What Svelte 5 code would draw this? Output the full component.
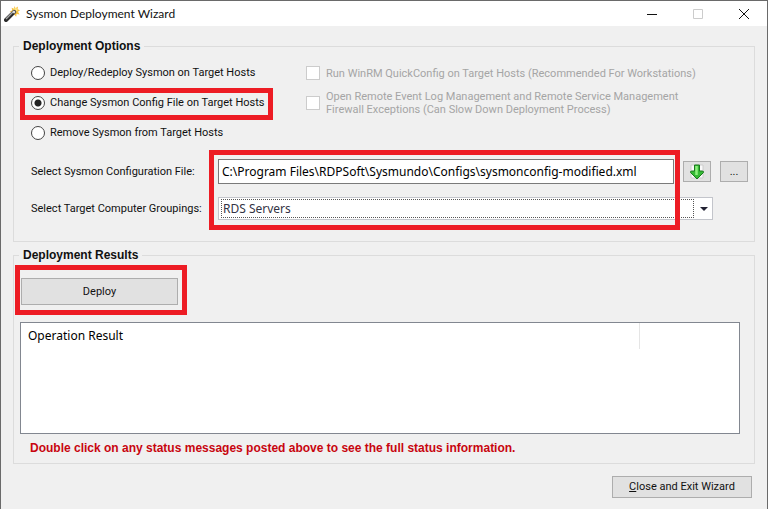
<script lang="ts">
  type Action = 'deploy' | 'change' | 'remove';

  const actions: { value: Action; label: string }[] = [
    { value: 'deploy', label: 'Deploy/Redeploy Sysmon on Target Hosts' },
    { value: 'change', label: 'Change Sysmon Config File on Target Hosts' },
    { value: 'remove', label: 'Remove Sysmon from Target Hosts' }
  ];

  let action = $state<Action>('change');
  let configFile = $state(
    'C:\\Program Files\\RDPSoft\\Sysmundo\\Configs\\sysmonconfig-modified.xml'
  );
  let grouping = $state('RDS Servers');
</script>

<svelte:head>
  <title>Sysmon Deployment Wizard</title>
</svelte:head>

<div class="window">
  <header class="titlebar">
    <svg class="wand" viewBox="0 0 16 16" aria-hidden="true">
      <path
        d="M10.5 0l1 2.2L14 .6l-.5 2.6 2.5 1-2 1.6 1.6 2.8-3-.6-.4 2.8-2-2.4-2.6 1 .8-2.7-2.8-1.4 2.7-.9-.7-2.6 2.4 1z"
        fill="#f7bf3c"
      />
      <circle cx="11.5" cy="4" r="2" fill="#ffe680" />
      <path d="M2 14L10.2 5.8" stroke="#2b2b2b" stroke-width="4" stroke-linecap="round" />
      <path d="M2 13L9.2 5.8" stroke="#a5a5a5" stroke-width="1.4" />
      <path d="M9.2 6.8l1.6-1.6" stroke="#ddd" stroke-width="2.6" />
    </svg>
    <h1>Sysmon Deployment Wizard</h1>
    <div class="window-buttons">
      <button type="button" aria-label="Minimize">
        <svg viewBox="0 0 12 12"><path d="M1 6.5h10" /></svg>
      </button>
      <button type="button" aria-label="Maximize" disabled>
        <svg viewBox="0 0 12 12"><path d="M1.5 1.5h9v9h-9z" /></svg>
      </button>
      <button type="button" aria-label="Close">
        <svg viewBox="0 0 12 12"><path d="M1 1l10 10M11 1L1 11" /></svg>
      </button>
    </div>
  </header>

  <main>
    <fieldset class="options">
      <legend>Deployment Options</legend>

      <div class="choices">
        <div class="radios">
          {#each actions as item}
            <div class="choice">
              <label>
                <input type="radio" name="action" value={item.value} bind:group={action} />
                {item.label}
              </label>
              {#if item.value === 'change'}
                <span class="highlight highlight-choice"></span>
              {/if}
            </div>
          {/each}
        </div>

        <div class="checks">
          <label class="choice">
            <input type="checkbox" disabled />
            <span>Run WinRM QuickConfig on Target Hosts (Recommended For Workstations)</span>
          </label>
          <label class="choice">
            <input type="checkbox" disabled />
            <span>
              Open Remote Event Log Management and Remote Service Management<br />
              Firewall Exceptions (Can Slow Down Deployment Process)
            </span>
          </label>
        </div>
      </div>

      <div class="form">
        <div class="labels">
          <label for="config">Select Sysmon Configuration File:</label>
          <label for="grouping">Select Target Computer Groupings:</label>
        </div>
        <div class="fields">
          <div class="file-row">
            <input id="config" type="text" bind:value={configFile} />
            <button type="button" class="small" aria-label="Download configuration">
              <svg class="download" viewBox="0 0 16 16">
                <path d="M2 1h12v13H2z" fill="#fafafa" stroke="#ccc" />
                <path
                  d="M5.5 1h5v6H13q2 0 1.5 1.5L8 15 1.500 8.500Q1 7 3 7h2.500z"
                  fill="#35b935"
                  stroke="#1c7a1f"
                  stroke-linejoin="round"
                />
                <path d="M7.500 2v9" stroke="#8df07c" stroke-width="2.500" />
              </svg>
            </button>
            <button type="button" class="small" aria-label="Browse">...</button>
          </div>
          <div class="combo">
            <select id="grouping" bind:value={grouping}>
              <option>RDS Servers</option>
            </select>
            <svg viewBox="0 0 8 4" aria-hidden="true"><path d="M0 0h8L4 4z" /></svg>
          </div>
          <span class="highlight highlight-fields"></span>
        </div>
      </div>
    </fieldset>

    <fieldset class="results">
      <legend>Deployment Results</legend>

      <div class="deploy">
        <button type="button">Deploy</button>
        <span class="highlight highlight-deploy"></span>
      </div>

      <div class="list">
        <table>
          <thead>
            <tr>
              <th>Operation Result</th>
              <th class="spare" aria-label="Details"></th>
            </tr>
          </thead>
        </table>
      </div>

      <p class="hint">
        Double click on any status messages posted above to see the full status information.
      </p>
    </fieldset>

    <footer>
      <button type="button" class="close"><u>C</u>lose and Exit Wizard</button>
    </footer>
  </main>
</div>

<style>
  :global(body) {
    margin: 0;
    background: #f0f0f0;
  }

  .window {
    box-sizing: border-box;
    min-height: 100vh;
    border: 1px solid #6a6a6a;
    border-bottom: 0;
    background: #f0f0f0;
    color: #111;
    font-family: Roboto, 'Liberation Sans', sans-serif;
    font-size: 11px;
    line-height: 14px;
  }

  button,
  input,
  select {
    box-sizing: border-box;
    margin: 0;
    color: inherit;
    font: inherit;
  }

  .titlebar {
    display: flex;
    align-items: center;
    height: 25px;
    padding-left: 3px;
    background: #fff;
  }

  .wand {
    width: 16px;
    height: 16px;
  }

  h1 {
    flex: 1;
    margin: 0 0 0 6px;
    font-family: Lato, 'Noto Sans', sans-serif;
    font-size: 12px;
    font-weight: 400;
  }

  .window-buttons {
    display: flex;
  }

  .window-buttons button {
    width: 46px;
    height: 25px;
    padding: 0;
    border: 0;
    background: none;
  }

  .window-buttons svg {
    display: block;
    width: 12px;
    height: 12px;
    margin: auto;
    fill: none;
    stroke: #111;
  }

  .window-buttons button:disabled svg {
    stroke: #ccc;
  }

  main {
    padding: 12px 12px 10px;
  }

  fieldset {
    min-width: 0;
    margin: 0;
    border: 1px solid #dcdcdc;
  }

  legend,
  .hint {
    font-family: 'Liberation Sans', Arial, sans-serif;
    font-size: 12px;
    font-weight: 700;
  }

  legend {
    padding: 0 4px;
    line-height: 16px;
  }

  .options {
    padding: 4px 6px 20px 17px;
  }

  .options legend {
    margin-left: -12px;
  }

  .choices {
    display: grid;
    grid-template-columns: 275px 1fr;
  }

  .radios {
    justify-self: start;
  }

  .choice {
    position: relative;
    display: flex;
    align-items: center;
    height: 30px;
  }

  .choice label {
    display: flex;
    align-items: center;
  }

  .choice input {
    flex: none;
    width: 14px;
    height: 14px;
    margin-right: 6px;
    border: 1px solid #444;
    background: #fff;
    appearance: none;
  }

  .choice input[type='radio'] {
    margin-right: 5px;
    border-radius: 50%;
  }

  .choice input[type='radio']:checked {
    background: radial-gradient(circle, #222 0 3px, #fff 4px);
  }

  .checks .choice {
    color: #a5a5a5;
    line-height: 13px;
  }

  .checks input {
    border-color: #ccc;
  }

  .form {
    display: grid;
    grid-template-columns: 187px 1fr;
    margin-top: 11px;
  }

  .labels,
  .fields {
    position: relative;
    display: grid;
    grid-template-rows: 25px 25px;
    row-gap: 12px;
    align-items: center;
  }

  .file-row {
    display: flex;
    align-items: center;
    gap: 9px;
    min-width: 0;
  }

  .file-row input {
    flex: 1;
    min-width: 0;
    height: 25px;
    padding: 0 3px;
    border: 1px solid #7a7a7a;
    background: #fff;
    color: #000;
    font-family: 'Noto Sans', 'Open Sans', sans-serif;
    font-size: 12px;
  }

  button.small {
    flex: none;
    width: 28px;
    height: 21px;
    padding: 0;
  }

  .small,
  .deploy button,
  .close {
    border: 1px solid #adadad;
    background: #e1e1e1;
  }

  .download {
    display: block;
    width: 16px;
    height: 16px;
    margin: auto;
  }

  .combo {
    position: relative;
    box-sizing: border-box;
    height: 23px;
    margin-right: 35px;
    padding: 1px 18px 1px 2px;
    border: 1px solid #c3c5cb;
    background: #fff;
  }

  .combo select {
    display: block;
    width: 100%;
    height: 19px;
    padding: 0 1px;
    border: 1px dotted #555;
    border-radius: 0;
    background: #fff;
    color: #334;
    font-family: 'Noto Sans', 'Open Sans', sans-serif;
    font-size: 12px;
    appearance: none;
  }

  .combo svg {
    position: absolute;
    top: 9px;
    right: 4px;
    width: 8px;
    height: 4px;
    fill: #223;
    pointer-events: none;
  }

  .highlight {
    position: absolute;
    box-sizing: border-box;
    border: 5px solid #ed1c24;
    pointer-events: none;
  }

  .highlight-choice {
    inset: 0 -8px -2px -11px;
  }

  .highlight-fields {
    inset: -9px 68px -9px -9px;
  }

  .highlight-deploy {
    inset: -13px -9px -10px -6px;
  }

  .results {
    margin-top: 5px;
    padding: 15px 14px 8px 6px;
  }

  .results legend {
    margin-left: -1px;
  }

  .deploy {
    position: relative;
    width: 157px;
    margin-left: 1px;
  }

  .deploy button {
    display: block;
    width: 100%;
    height: 27px;
  }

  .list {
    box-sizing: border-box;
    height: 112px;
    margin-top: 17px;
    border: 1px solid #828790;
    background: #fff;
    font-family: 'Noto Sans', 'Open Sans', sans-serif;
    font-size: 12px;
  }

  table {
    width: 100%;
    border-collapse: collapse;
    table-layout: fixed;
  }

  th {
    height: 26px;
    padding: 0 7px;
    border-right: 1px solid #e5e5e5;
    color: #000;
    font-weight: 400;
    text-align: left;
  }

  .spare {
    width: 85px;
    border-right: 0;
  }

  .hint {
    margin: 7px 0 0 10px;
    color: #c8050f;
  }

  footer {
    display: flex;
    justify-content: flex-end;
    margin-top: 12px;
    padding-right: 3px;
  }

  .close {
    width: 140px;
    height: 22px;
    padding: 0;
  }
</style>
